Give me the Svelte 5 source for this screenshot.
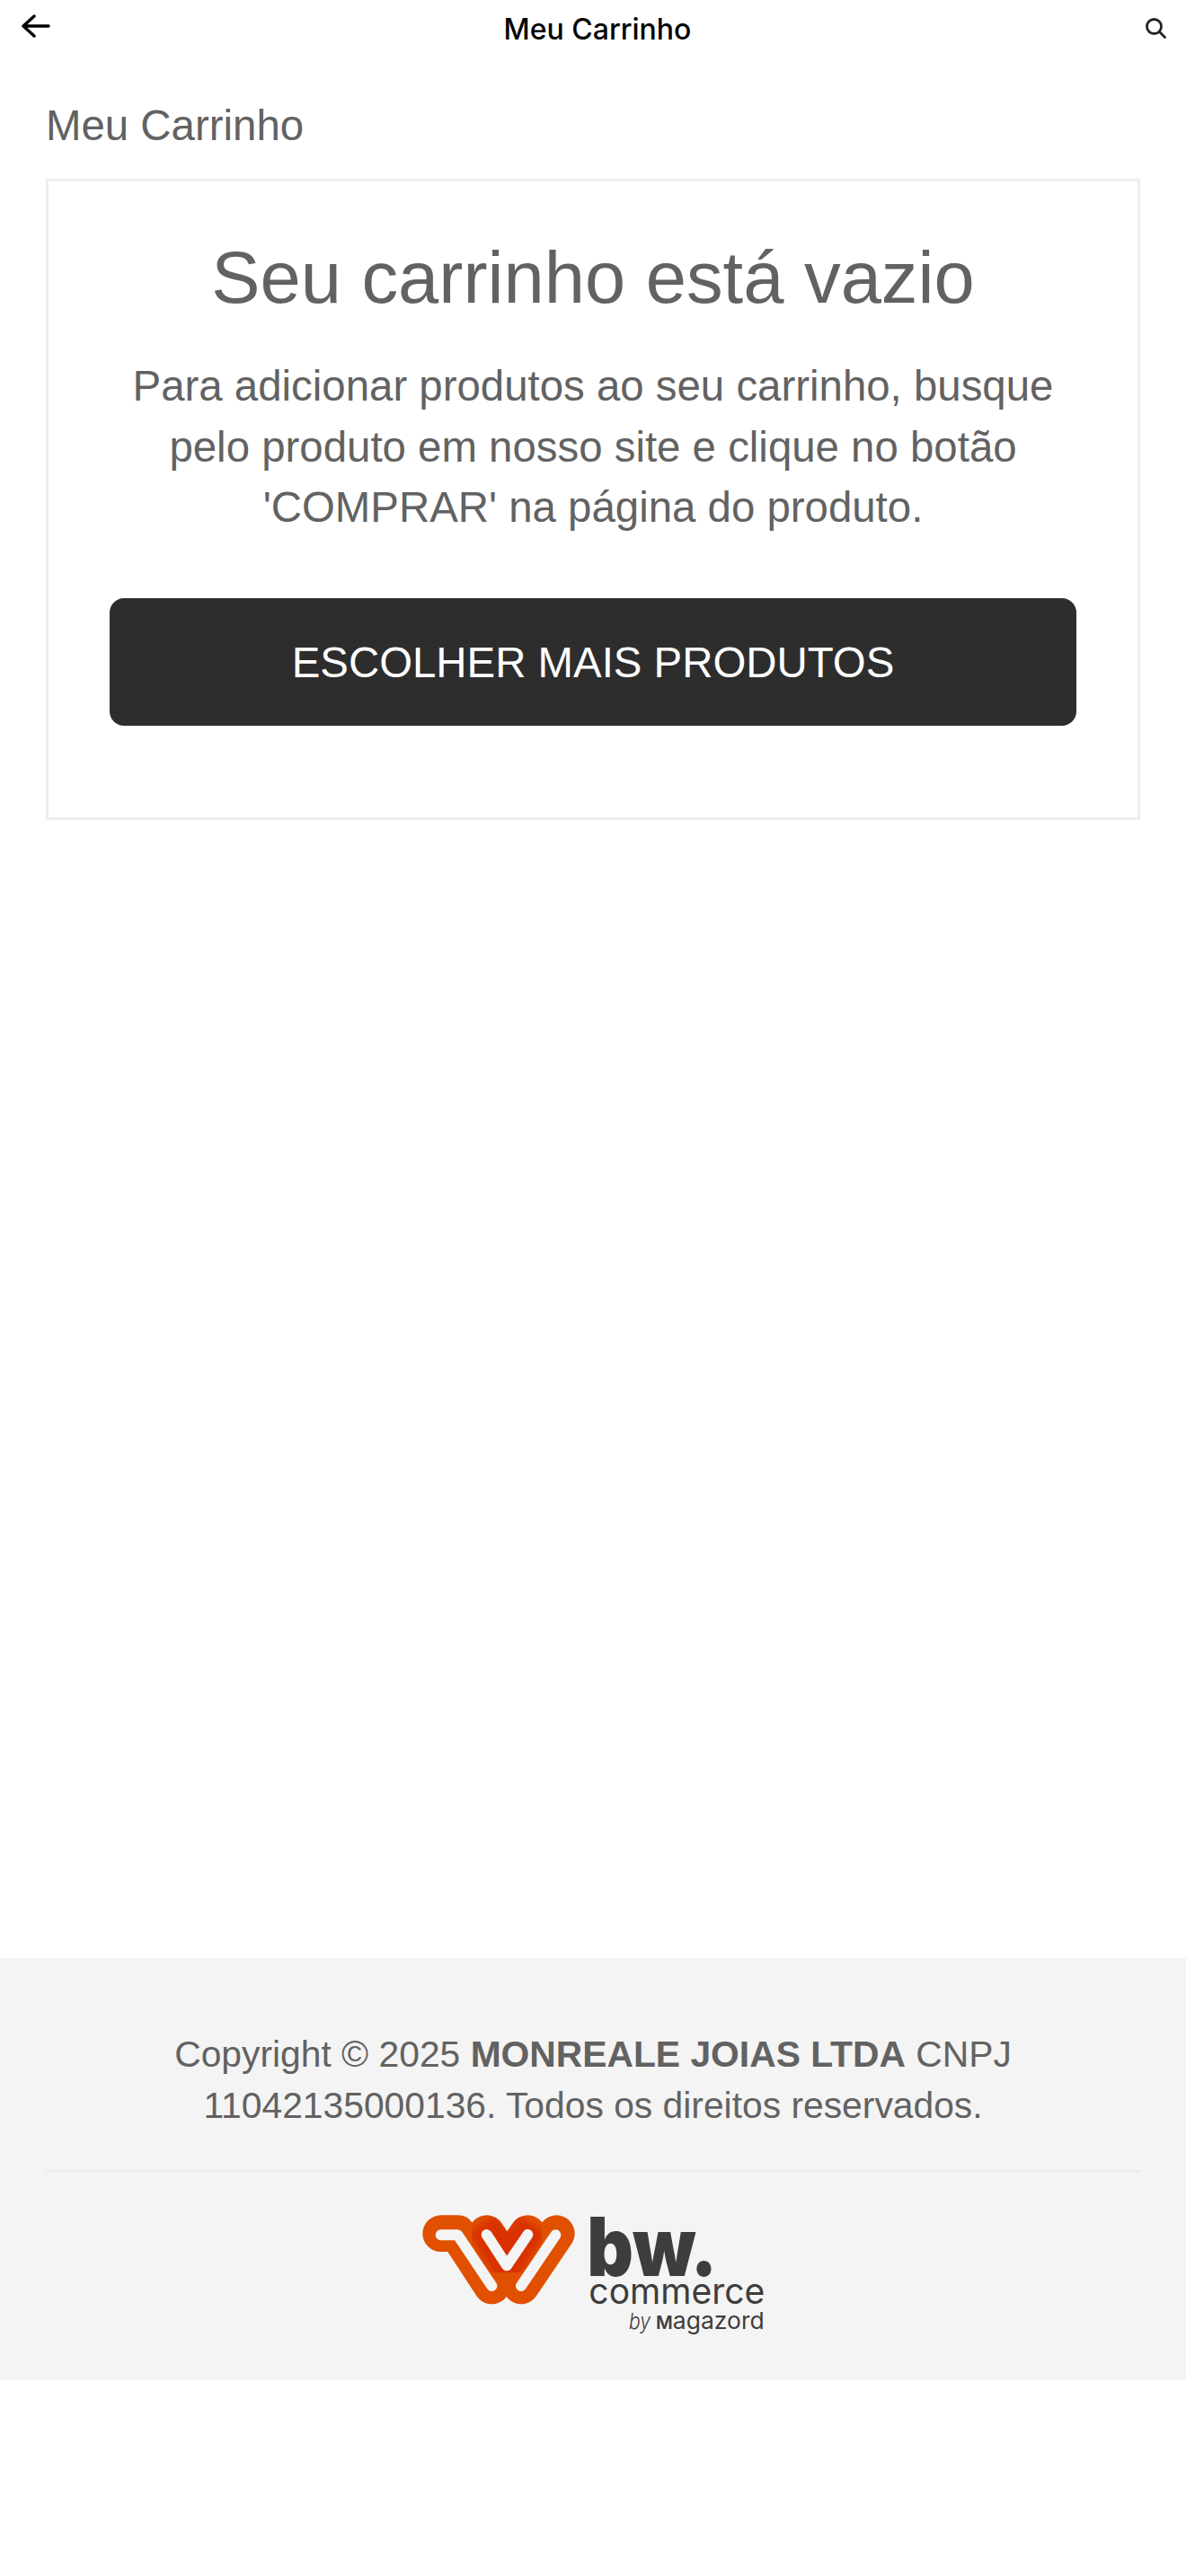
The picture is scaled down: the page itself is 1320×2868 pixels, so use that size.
<script>
  const title = 'Meu Carrinho';
</script>

<div class="page">
  <header class="topbar">
    <button class="icon-btn back" aria-label="Voltar">
      <svg width="34" height="28" viewBox="0 0 34 28" fill="none" stroke="#000" stroke-width="3.4" stroke-linecap="round" stroke-linejoin="round">
        <path d="M31 13H3M15 2 3 13l12 11" />
      </svg>
    </button>
    <span class="topbar-title">{title}</span>
    <button class="icon-btn search" aria-label="Buscar">
      <svg width="26" height="26" viewBox="0 0 26 26" fill="none" stroke="#222" stroke-width="2.8" stroke-linecap="round">
        <circle cx="10.5" cy="10.5" r="8" />
        <path d="m16.5 16.5 6 6" />
      </svg>
    </button>
  </header>

  <main class="content">
    <h2 class="page-title">{title}</h2>
    <section class="empty-box">
      <h1>Seu carrinho está vazio</h1>
      <p>Para adicionar produtos ao seu carrinho, busque pelo produto em nosso site e clique no botão 'COMPRAR' na página do produto.</p>
      <a class="cta" href="#produtos">ESCOLHER MAIS PRODUTOS</a>
    </section>
  </main>

  <footer class="footer">
    <p class="copyright">Copyright © 2025 <strong>MONREALE JOIAS LTDA</strong> CNPJ 11042135000136. Todos os direitos reservados.</p>
    <hr />
    <svg class="logo" width="440" height="170" viewBox="0 0 1320 510" role="img" aria-label="bw. commerce by Magazord">
      <defs>
        <filter id="soft" x="-20%" y="-20%" width="140%" height="140%"><feGaussianBlur stdDeviation="11" /></filter>
        <mask id="mark-shape">
          <g fill="none" stroke="#fff" stroke-width="122" stroke-linecap="round" stroke-linejoin="round">
            <path d="M152 143H208L322 318" />
            <path d="M305 143 372 245 442 143" />
            <path d="M538 143 420 318" />
          </g>
        </mask>
      </defs>
      <g mask="url(#mark-shape)">
        <rect x="60" y="50" width="580" height="360" fill="#e05000" />
        <path d="M290 110 372 245 455 110" fill="none" stroke="#d93006" stroke-width="112" stroke-linejoin="miter" filter="url(#soft)" />
      </g>
      <g fill="none" stroke="#f4f4f4" stroke-width="36" stroke-linecap="round" stroke-linejoin="round">
        <path d="M152 148H208L322 318" />
        <path d="M305 147 372 250 442 147" />
        <path d="M535 148 420 318" />
      </g>
      <text class="w-bw" x="640" y="285" textLength="435" lengthAdjust="spacingAndGlyphs">bw.</text>
      <text class="w-commerce" x="646" y="379" textLength="588" lengthAdjust="spacingAndGlyphs">commerce</text>
      <text class="w-by" x="780" y="463" textLength="72" lengthAdjust="spacingAndGlyphs">by</text>
      <text class="w-mag" x="870" y="463" textLength="362" lengthAdjust="spacingAndGlyphs"><tspan class="w-m">M</tspan>agazord</text>
    </svg>
  </footer>
</div>

<style>
  :global(body) {
    margin: 0;
    background: #fff;
  }

  .page {
    min-height: 2868px;
    font-family: "Liberation Sans", Arial, sans-serif;
    color: #626262;
  }

  .topbar {
    height: 64px;
    display: flex;
    align-items: center;
    justify-content: space-between;
    padding: 0 20px 0 22px;
    box-sizing: border-box;
    position: relative;
  }

  .icon-btn {
    border: 0;
    padding: 0;
    background: none;
    display: flex;
  }

  .back {
    margin-top: -4px;
    margin-left: 1px;
  }

  .topbar-title {
    position: absolute;
    left: 0;
    right: 0;
    text-align: center;
    padding-left: 10px;
    font-family: Inter, "Open Sans", sans-serif;
    font-size: 32px;
    font-weight: 500;
    color: #000;
  }

  .content {
    height: 2116px;
    box-sizing: border-box;
    padding: 46px 51px 0;
  }

  .page-title {
    margin: 0 0 29px;
    font-size: 47.4px;
    line-height: 60px;
    font-weight: 400;
  }

  .empty-box {
    box-sizing: border-box;
    height: 714px;
    border: 3px solid #eee;
    padding: 57px 68px 0;
    text-align: center;
  }

  h1 {
    margin: 0;
    font-size: 81.3px;
    line-height: 100px;
    font-weight: 400;
  }

  .empty-box p {
    margin: 37px 0 0;
    padding: 0 8px;
    font-size: 47.4px;
    line-height: 67.7px;
  }

  .cta {
    display: flex;
    align-items: center;
    justify-content: center;
    height: 142px;
    margin-top: 67px;
    border-radius: 16px;
    background: #2d2d2d;
    color: #fff;
    font-size: 47.4px;
    text-decoration: none;
  }

  .footer {
    height: 470px;
    box-sizing: border-box;
    background: #f4f4f4;
    padding: 79px 51px 0;
    text-align: center;
  }

  .copyright {
    margin: 0;
    font-size: 40.8px;
    line-height: 57px;
    padding: 0 60px;
  }

  hr {
    margin: 43px 0 0;
    border: 0;
    border-top: 2px solid #eaeaea;
  }

  .logo {
    display: block;
    margin: 21px auto 0;
  }

  .logo text {
    fill: #3d3d3d;
    font-family: Inter, "Open Sans", sans-serif;
  }

  .w-bw {
    font-size: 272px;
    font-weight: 900;
  }

  .w-commerce {
    font-size: 118px;
    font-weight: 400;
  }

  .w-by {
    font-size: 72px;
    font-style: italic;
    font-weight: 300;
  }

  .w-mag {
    font-size: 78px;
    font-weight: 400;
  }

  .w-m {
    font-size: 60px;
    font-weight: 600;
  }
</style>
